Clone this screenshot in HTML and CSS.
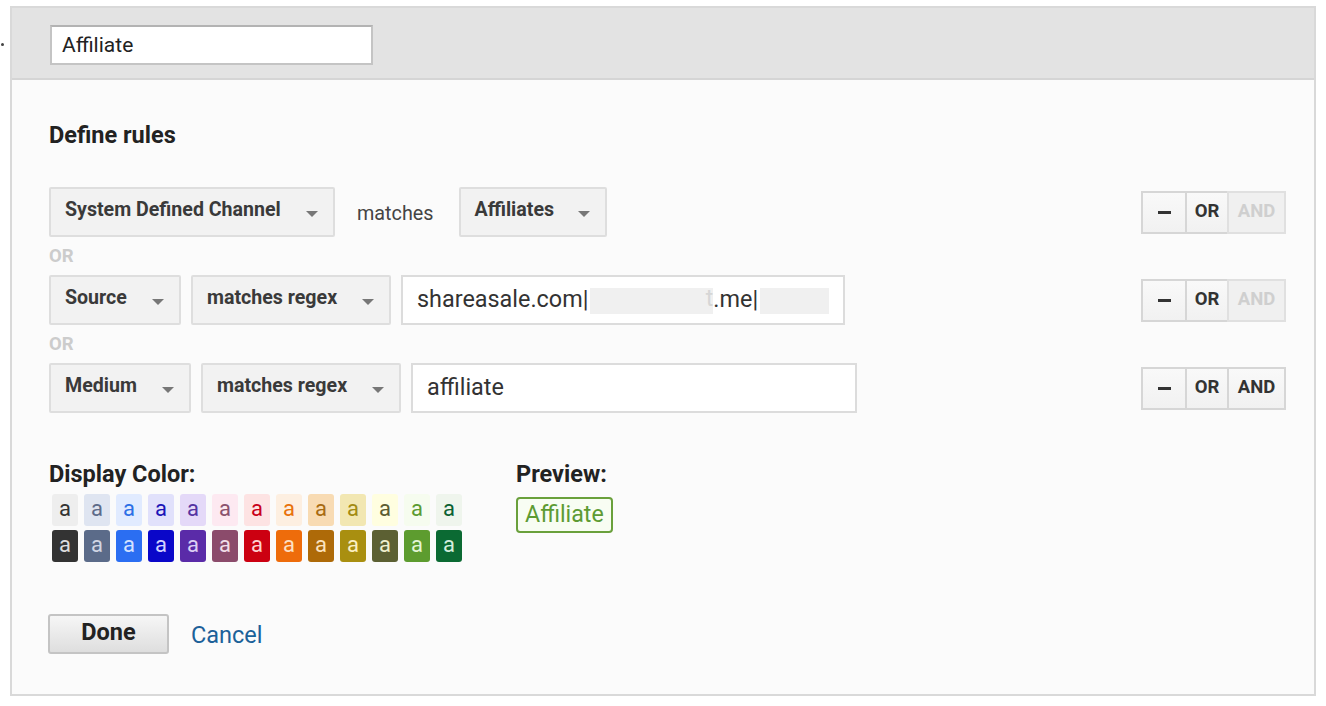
FILE: index.html
```html
<!DOCTYPE html>
<html>
<head>
<meta charset="utf-8">
<link rel="stylesheet" href="styles.css">
</head>
<body>
<div class="page">
  <div class="dot"></div>
  <div class="panel">
    <div class="header">
      <div class="name-input">Affiliate</div>
    </div>
    <div class="body">
      <h2 class="heading">Define rules</h2>

      <div class="rule">
        <div class="conds">
          <div class="dd w286">System Defined Channel<span class="arrow"></span></div>
          <span class="op-text">matches</span>
          <div class="dd w148">Affiliates<span class="arrow"></span></div>
        </div>
        <div class="btns">
          <div class="btn minus"><span class="bar"></span></div>
          <div class="btn or">OR</div>
          <div class="btn and off">AND</div>
        </div>
      </div>
      <div class="or-label">OR</div>
      <div class="rule">
        <div class="conds">
          <div class="dd w132">Source<span class="arrow"></span></div>
          <div class="dd w200">matches regex<span class="arrow"></span></div>
          <div class="txt w444">shareasale.com|<span class="blur b1"><span class="faint">t</span></span>.me|<span class="blur b2"></span></div>
        </div>
        <div class="btns">
          <div class="btn minus"><span class="bar"></span></div>
          <div class="btn or">OR</div>
          <div class="btn and off">AND</div>
        </div>
      </div>
      <div class="or-label">OR</div>
      <div class="rule">
        <div class="conds">
          <div class="dd w142">Medium<span class="arrow"></span></div>
          <div class="dd w200">matches regex<span class="arrow"></span></div>
          <div class="txt w446">affiliate</div>
        </div>
        <div class="btns">
          <div class="btn minus"><span class="bar"></span></div>
          <div class="btn or">OR</div>
          <div class="btn and">AND</div>
        </div>
      </div>

      <div class="colors-row">
        <div class="display-color">
          <div class="label">Display Color:</div>
          <div class="swatches">
            <div class="sw" style="background:#eeeeee;color:#333333">a</div>
            <div class="sw" style="background:#dfe5f1;color:#5d6b8a">a</div>
            <div class="sw" style="background:#e1ebff;color:#2c6fe6">a</div>
            <div class="sw" style="background:#e1e1fb;color:#1c14b8">a</div>
            <div class="sw" style="background:#e4d9f8;color:#5533a2">a</div>
            <div class="sw" style="background:#fde9f1;color:#8b526e">a</div>
            <div class="sw" style="background:#fde3e3;color:#c9001a">a</div>
            <div class="sw" style="background:#fdefe1;color:#e8720c">a</div>
            <div class="sw" style="background:#f8dbb3;color:#a86b12">a</div>
            <div class="sw" style="background:#f2e7b2;color:#a28b12">a</div>
            <div class="sw" style="background:#fffee0;color:#5c5c32">a</div>
            <div class="sw" style="background:#f6fcef;color:#5c9b33">a</div>
            <div class="sw" style="background:#eff5ed;color:#0b6133">a</div>

            <div class="sw" style="background:#333333;color:#dddddd">a</div>
            <div class="sw" style="background:#5b6b89;color:#d0d6e4">a</div>
            <div class="sw" style="background:#2b6ef2;color:#d4e2ff">a</div>
            <div class="sw" style="background:#0a07c9;color:#d2d2ff">a</div>
            <div class="sw" style="background:#5a2ba8;color:#dcd0f4">a</div>
            <div class="sw" style="background:#8b4b6b;color:#f1dde7">a</div>
            <div class="sw" style="background:#cc0011;color:#fdd0d0">a</div>
            <div class="sw" style="background:#ee6c0b;color:#fde0c4">a</div>
            <div class="sw" style="background:#ae6a08;color:#fbe2bd">a</div>
            <div class="sw" style="background:#a98f10;color:#fbf0c2">a</div>
            <div class="sw" style="background:#5c6033;color:#efefcd">a</div>
            <div class="sw" style="background:#5d9c2f;color:#e3f5d6">a</div>
            <div class="sw" style="background:#0b6a33;color:#d3eedd">a</div>
          </div>
        </div>
        <div class="preview">
          <div class="label">Preview:</div>
          <div class="badge">Affiliate</div>
        </div>
      </div>

      <div class="actions">
        <div class="done">Done</div>
        <a class="cancel">Cancel</a>
      </div>
    </div>
  </div>
</div>
</body>
</html>
```

FILE: styles.css
```css
html, body {
  margin: 0;
  padding: 0;
  background: #ffffff;
}
body {
  font-family: Roboto, "Liberation Sans", Arial, sans-serif;
  color: #333333;
}
.page {
  display: flex;
  align-items: flex-start;
}
.dot {
  width: 3px;
  height: 3px;
  background: #444;
  margin: 43px 0 0 1px;
  border-radius: 2px;
}
.panel {
  margin: 6px 0 0 6px;
  width: 1306px;
  height: 690px;
  box-sizing: border-box;
  border: 2px solid #d9d9d9;
  background: #fbfbfb;
  display: flex;
  flex-direction: column;
}
.header {
  background: #e3e3e3;
  padding: 17px 0 13px 38px;
  border-bottom: 2px solid #d5d5d5;
}
.name-input {
  width: 323px;
  height: 40px;
  box-sizing: border-box;
  background: #fff;
  border: 2px solid #c4c4c4;
  border-top-color: #b3b3b3;
  font-size: 21px;
  color: #222;
  padding: 0 10px;
  line-height: 36px;
}
.body {
  padding: 41px 28px 0 37px;
}
.heading {
  margin: 0 0 38px 0;
  font-size: 23.5px;
  line-height: 28px;
  font-weight: 700;
  color: #222;
}
.rule {
  display: flex;
  align-items: center;
  justify-content: space-between;
}
.conds {
  display: flex;
  align-items: center;
  gap: 10px;
}
.dd {
  height: 50px;
  box-sizing: border-box;
  background: #f2f2f2;
  border: 2px solid #dedede;
  border-radius: 2px;
  font-size: 19.6px;
  font-weight: 700;
  color: #3a3a3a;
  padding: 0 15px 5px 14px;
  display: flex;
  align-items: center;
  justify-content: space-between;
  white-space: nowrap;
}
.arrow {
  width: 0;
  height: 0;
  border-left: 6px solid transparent;
  border-right: 6px solid transparent;
  border-top: 6px solid #777;
  margin-top: 9px;
}
.w286 { width: 286px; }
.w148 { width: 148px; }
.w132 { width: 132px; }
.w142 { width: 142px; }
.w200 { width: 200px; }
.w444 { width: 444px; }
.w446 { width: 446px; }
.op-text {
  font-size: 19.8px;
  color: #444;
  margin: 0 15px 0 12px;
  padding-top: 2px;
}
.txt {
  height: 50px;
  box-sizing: border-box;
  background: #fff;
  border: 2px solid #dcdcdc;
  font-size: 23.4px;
  color: #333;
  padding: 0 14px 2px 14px;
  display: flex;
  align-items: center;
  white-space: nowrap;
}
.blur {
  display: inline-block;
  height: 26px;
  background: #f0f0f0;
  margin-top: 4px;
}
.b1 { width: 125px; margin-left: 2px; }
.b2 { width: 70px; margin-left: 2px; }
.faint {
  color: #d6d6d6;
  font-size: 23px;
  float: right;
  line-height: 22px;
}
.btns {
  display: flex;
}
.btn {
  height: 43px;
  box-sizing: border-box;
  border: 2px solid #d6d6d6;
  background: linear-gradient(#f9f9f9, #f1f1f1);
  font-size: 18.5px;
  font-weight: 700;
  color: #333;
  display: flex;
  align-items: center;
  justify-content: center;
  padding-bottom: 2px;
}
.btn + .btn { margin-left: -2px; }
.minus { width: 46px; padding-bottom: 0; }
.bar {
  width: 13px;
  height: 3px;
  background: #333;
}
.or { width: 44px; }
.and { width: 59px; }
.and.off {
  color: #cfcfcf;
  background: #f0f0f0;
  border-color: #e0e0e0;
}
.or-label {
  font-size: 18.5px;
  font-weight: 700;
  color: #cccccc;
  height: 38px;
  line-height: 38px;
}
.colors-row {
  display: flex;
  margin-top: 47px;
}
.label {
  font-size: 23.5px;
  font-weight: 700;
  color: #222;
  line-height: 28px;
}
.display-color {
  width: 467px;
}
.swatches {
  margin: 6px 0 0 3px;
  display: grid;
  grid-template-columns: repeat(13, 26px);
  grid-auto-rows: 32px;
  column-gap: 6px;
  row-gap: 4px;
}
.sw {
  border-radius: 3px;
  font-size: 22px;
  line-height: 30px;
  text-align: center;
}
.badge {
  margin-top: 9px;
  display: inline-block;
  height: 36px;
  box-sizing: border-box;
  border: 2px solid #6aa03c;
  border-radius: 4px;
  background: #f8fdf3;
  color: #5d9b33;
  font-size: 23.2px;
  line-height: 31px;
  padding: 0 7px;
}
.actions {
  margin-top: 52px;
  display: flex;
  align-items: center;
  margin-left: -1px;
}
.done {
  width: 121px;
  height: 40px;
  box-sizing: border-box;
  border: 2px solid #c4c4c4;
  border-radius: 3px;
  background: linear-gradient(#f6f6f6, #dedede);
  font-size: 23.5px;
  font-weight: 700;
  color: #222;
  text-align: center;
  line-height: 33px;
}
.cancel {
  margin-left: 22px;
  font-size: 23.5px;
  color: #1b6199;
  padding-top: 2px;
}
```
